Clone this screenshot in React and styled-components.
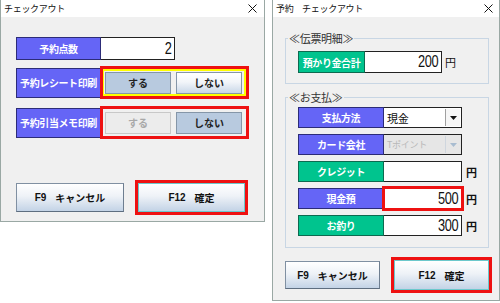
import React from "react";
import styled, { createGlobalStyle } from "styled-components";

const GlobalStyle = createGlobalStyle`
  html, body {
    margin: 0;
    padding: 0;
    background: #ffffff;
  }
  * {
    box-sizing: border-box;
  }
  body {
    font-family: "Noto Sans CJK JP", "Noto Sans", sans-serif;
  }
`;

const Desktop = styled.div`
  display: flex;
  align-items: flex-start;
  gap: 7px;
  width: 500px;
  height: 303px;
  overflow: hidden;
  background: #ffffff;
`;

const Window = styled.div`
  display: flex;
  flex-direction: column;
  width: ${(p) => p.$w}px;
  height: ${(p) => p.$h}px;
  background: #f0f0f0;
  border: 1px solid #9aa8a4;
  border-top: none;
`;

const TitleBar = styled.div`
  display: flex;
  align-items: center;
  justify-content: space-between;
  height: 17px;
  flex-shrink: 0;
  padding: 0 ${(p) => p.$right}px 0 3px;
  background: #ffffff;
  font-size: 9px;
  color: #111;
  letter-spacing: -0.3px;
`;

const Body = styled.div`
  display: flex;
  flex-direction: column;
  padding: 0 0 0 ${(p) => p.$left}px;
`;

const Row = styled.div`
  display: flex;
  align-items: center;
  margin-top: ${(p) => p.$top}px;
`;

const Label = styled.div`
  display: flex;
  align-items: center;
  justify-content: center;
  width: ${(p) => p.$w}px;
  height: ${(p) => p.$h}px;
  background: ${(p) => (p.$green ? "#00c48e" : "#6565f6")};
  border: 1px solid ${(p) => (p.$green ? "#0d6a50" : "#2c2c78")};
  color: #ffffff;
  font-size: 10px;
  font-weight: 700;
  letter-spacing: -0.4px;
  white-space: nowrap;
`;

const NumberBox = styled.div`
  display: flex;
  align-items: center;
  justify-content: flex-end;
  width: ${(p) => p.$w}px;
  height: ${(p) => p.$h}px;
  padding-right: 3px;
  background: ${(p) => (p.$disabled ? "#eaeaea" : "#ffffff")};
  border: 1px solid #222;
  border-left: none;
  color: #111;
  outline: ${(p) => (p.$mark ? "3px solid #ee1111" : "none")};
  outline-offset: -1px;
`;

const Digits = styled.span`
  display: inline-block;
  font-family: "Liberation Sans", sans-serif;
  font-size: 16px;
  line-height: 16px;
  letter-spacing: -0.5px;
  transform: scaleX(0.8);
  transform-origin: right center;
`;

const MarkBox = styled.div`
  display: flex;
  align-items: center;
  width: ${(p) => p.$w}px;
  height: ${(p) => p.$h}px;
  margin-left: ${(p) => p.$ml || 0}px;
  border: 3px solid #ee1111;
`;

const ToggleGroup = styled.div`
  display: flex;
  align-items: center;
  gap: 5px;
  width: 100%;
  height: 100%;
  padding: 0 1px;
  border: 2px solid ${(p) => (p.$focus ? "#ffff00" : "transparent")};
  border-left-width: 1px;
`;

const Toggle = styled.div`
  display: flex;
  align-items: center;
  justify-content: center;
  width: 66px;
  height: 22px;
  font-size: 10px;
  font-weight: 700;
  border: 1px solid ${(p) => (p.$state === "off" ? "#c8c8c8" : "#8596a8")};
  color: ${(p) => (p.$state === "off" ? "#a8a8a8" : "#222")};
  background: ${(p) =>
    p.$state === "on"
      ? "#b8cadf"
      : p.$state === "off"
      ? "#ececec"
      : "linear-gradient(#ffffff, #f2f5f9 45%, #c9d7e8)"};
`;

const Button = styled.div`
  display: flex;
  align-items: center;
  justify-content: center;
  gap: 9px;
  width: ${(p) => p.$w}px;
  height: ${(p) => p.$h}px;
  background: linear-gradient(#ffffff, #eef2f7 45%, #c3d3e6);
  border: ${(p) => (p.$accent ? "1px solid #6cc8cc" : "1px solid #8090a2")};
  border-bottom-color: ${(p) => (p.$accent ? "#6cc8cc" : "#5e6e80")};
  border-right-color: ${(p) => (p.$accent ? "#6cc8cc" : "#6e7e90")};
  font-size: 10px;
  font-weight: 700;
  color: #111;
`;

const ButtonKey = styled.span`
  font-family: "Liberation Sans", sans-serif;
  font-size: 10px;
  font-weight: 700;
`;

const Group = styled.div`
  position: relative;
  display: flex;
  flex-direction: column;
  gap: 6px;
  width: 204px;
  height: ${(p) => p.$h}px;
  margin-top: ${(p) => p.$top}px;
  padding: ${(p) => p.$pt}px 0 0 12px;
  border: 1px solid #c8d6e4;
`;

const Legend = styled.span`
  position: absolute;
  top: -8px;
  left: 2px;
  padding: 0 1px;
  background: #f0f0f0;
  font-size: 11px;
  line-height: 14px;
  color: #333;
  letter-spacing: -0.3px;
`;

const Field = styled.div`
  display: flex;
  align-items: center;
`;

const Yen = styled.span`
  margin-left: ${(p) => p.$ml}px;
  font-size: 11px;
  font-weight: ${(p) => (p.$bold ? 700 : 400)};
  color: #111;
`;

const Select = styled.div`
  display: flex;
  align-items: center;
  justify-content: space-between;
  width: 78px;
  height: 21px;
  padding: 1px;
  background: ${(p) => (p.$disabled ? "#e6e6e6" : "#ffffff")};
  border: 1px solid #222;
  border-left: none;
`;

const SelectText = styled.span`
  padding-left: 2px;
  font-size: ${(p) => (p.$disabled ? 9 : 11)}px;
  color: ${(p) => (p.$disabled ? "#b8b8b8" : "#111")};
  letter-spacing: -0.3px;
`;

const SelectArrow = styled.div`
  display: flex;
  align-items: center;
  justify-content: center;
  width: 15px;
  height: 100%;
  background: ${(p) => (p.$disabled ? "#e6e6e6" : "#f6f6f6")};
  border-left: 1px solid ${(p) => (p.$disabled ? "#cfd6de" : "#a0a0a0")};
`;

const Close = () => (
  <svg width="9" height="9" viewBox="0 0 9 9">
    <path d="M0.5 0.5 L8.5 8.5 M8.5 0.5 L0.5 8.5" stroke="#111" strokeWidth="1" />
  </svg>
);

const Arrow = ({ disabled }) => (
  <svg width="7" height="4" viewBox="0 0 7 4">
    <path d="M0 0 H7 L3.5 4 Z" fill={disabled ? "#a8bcd0" : "#111"} />
  </svg>
);

function LeftWindow() {
  return (
    <Window $w={265} $h={222}>
      <TitleBar $right={7}>
        <span>チェックアウト</span>
        <Close />
      </TitleBar>
      <Body $left={15}>
        <Row $top={20}>
          <Label $w={85} $h={23}>予約点数</Label>
          <NumberBox $w={74} $h={23}>
            <Digits>2</Digits>
          </NumberBox>
        </Row>
        <Row $top={6}>
          <Label $w={85} $h={30}>予約レシート印刷</Label>
          <MarkBox $w={149} $h={33} $ml={-1}>
            <ToggleGroup $focus>
              <Toggle $state="on">する</Toggle>
              <Toggle>しない</Toggle>
            </ToggleGroup>
          </MarkBox>
        </Row>
        <Row $top={7}>
          <Label $w={85} $h={30}>予約引当メモ印刷</Label>
          <MarkBox $w={149} $h={33} $ml={-1}>
            <ToggleGroup>
              <Toggle $state="off">する</Toggle>
              <Toggle $state="on">しない</Toggle>
            </ToggleGroup>
          </MarkBox>
        </Row>
        <Row $top={41}>
          <Button $w={108} $h={29}>
            <ButtonKey>F9</ButtonKey>
            <span>キャンセル</span>
          </Button>
          <MarkBox $w={113} $h={35} $ml={11}>
            <Button $w={107} $h={29} $accent>
              <ButtonKey>F12</ButtonKey>
              <span>確定</span>
            </Button>
          </MarkBox>
        </Row>
      </Body>
    </Window>
  );
}

function RightWindow() {
  return (
    <Window $w={228} $h={301}>
      <TitleBar $right={6}>
        <span>予約　チェックアウト</span>
        <Close />
      </TitleBar>
      <Body $left={12}>
        <Group $h={46} $top={21} $pt={12}>
          <Legend>≪伝票明細≫</Legend>
          <Field>
            <Label $w={67} $h={22} $green>預かり金合計</Label>
            <NumberBox $w={77} $h={22}>
              <Digits>200</Digits>
            </NumberBox>
            <Yen $ml={3}>円</Yen>
          </Field>
        </Group>
        <Group $h={151} $top={13} $pt={9}>
          <Legend>≪お支払≫</Legend>
          <Field>
            <Label $w={86} $h={21}>支払方法</Label>
            <Select>
              <SelectText>現金</SelectText>
              <SelectArrow>
                <Arrow />
              </SelectArrow>
            </Select>
          </Field>
          <Field>
            <Label $w={86} $h={21}>カード会社</Label>
            <Select $disabled>
              <SelectText $disabled>Tポイント</SelectText>
              <SelectArrow $disabled>
                <Arrow disabled />
              </SelectArrow>
            </Select>
          </Field>
          <Field>
            <Label $w={86} $h={21} $green>クレジット</Label>
            <NumberBox $w={78} $h={21} />
            <Yen $ml={4} $bold>円</Yen>
          </Field>
          <Field>
            <Label $w={86} $h={21}>現金預</Label>
            <NumberBox $w={78} $h={21} $mark>
              <Digits>500</Digits>
            </NumberBox>
            <Yen $ml={4} $bold>円</Yen>
          </Field>
          <Field>
            <Label $w={86} $h={21} $green>お釣り</Label>
            <NumberBox $w={78} $h={21}>
              <Digits>300</Digits>
            </NumberBox>
            <Yen $ml={4} $bold>円</Yen>
          </Field>
        </Group>
        <Row $top={9}>
          <Button $w={95} $h={28}>
            <ButtonKey>F9</ButtonKey>
            <span>キャンセル</span>
          </Button>
          <MarkBox $w={101} $h={36} $ml={11}>
            <Button $w={95} $h={30} $accent>
              <ButtonKey>F12</ButtonKey>
              <span>確定</span>
            </Button>
          </MarkBox>
        </Row>
      </Body>
    </Window>
  );
}

export default function App() {
  return (
    <>
      <GlobalStyle />
      <Desktop>
        <LeftWindow />
        <RightWindow />
      </Desktop>
    </>
  );
}
